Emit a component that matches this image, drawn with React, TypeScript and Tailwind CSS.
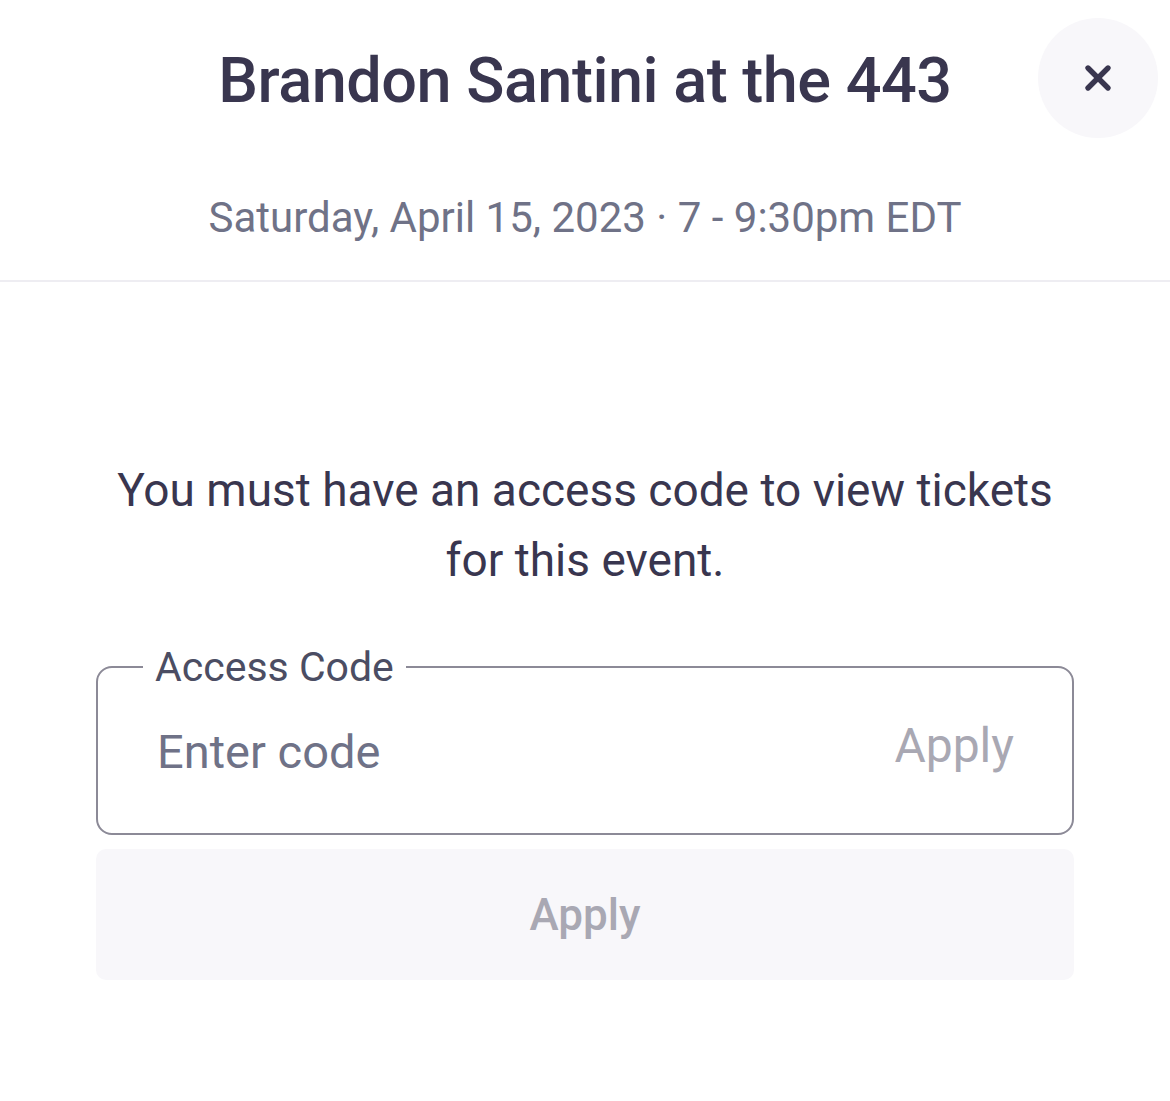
import { X } from 'lucide-react'

export default function App() {
  return (
    <div className="min-h-[1101px] bg-white text-[#39364f]" style={{ fontFamily: 'Roboto, "Noto Sans", sans-serif' }}>
      {/* Header */}
      <header className="relative border-b-2 border-[#eeedf2]">
        <h1 className="pt-[42px] text-center text-[63px] font-medium leading-[78px] tracking-[-0.5px] text-[#39364f]">
          Brandon Santini at the 443
        </h1>
        <p className="mt-[72px] pb-[36px] text-center text-[42px] leading-[52px] text-[#6f7287]">
          Saturday, April 15, 2023 · 7 - 9:30pm EDT
        </p>
        <button className="absolute right-[12px] top-[18px] flex h-[120px] w-[120px] items-center justify-center rounded-full bg-[#f8f7fa]">
          <X size={40} strokeWidth={3.2} className="text-[#39364f]" />
        </button>
      </header>

      {/* Body */}
      <main className="px-[96px] pt-[173px]">
        <p className="mx-auto text-center text-[46px] leading-[70px] text-[#39364f]">
          You must have an access code to view tickets
          <br />
          for this event.
        </p>

        <fieldset className="mt-[52px] rounded-[16px] border-2 border-[#8c8a97] pb-[53px] pl-[45px] pr-[58px]">
          <legend className="px-[12px] text-[41px] leading-[40px] text-[#4b4d63]">Access Code</legend>
          <div className="flex items-center justify-between pl-[14px] pt-[37px]">
            <span className="text-[47px] leading-[56px] text-[#6f7287]">Enter code</span>
            <span className="-mt-[12px] text-[48px] leading-[56px] text-[#a9a8b3]">Apply</span>
          </div>
        </fieldset>

        <button className="mt-[14px] flex h-[131px] w-full items-center justify-center rounded-[10px] bg-[#f8f7fa] text-[44px] font-medium text-[#a9a8b3]">
          Apply
        </button>
      </main>
    </div>
  )
}
